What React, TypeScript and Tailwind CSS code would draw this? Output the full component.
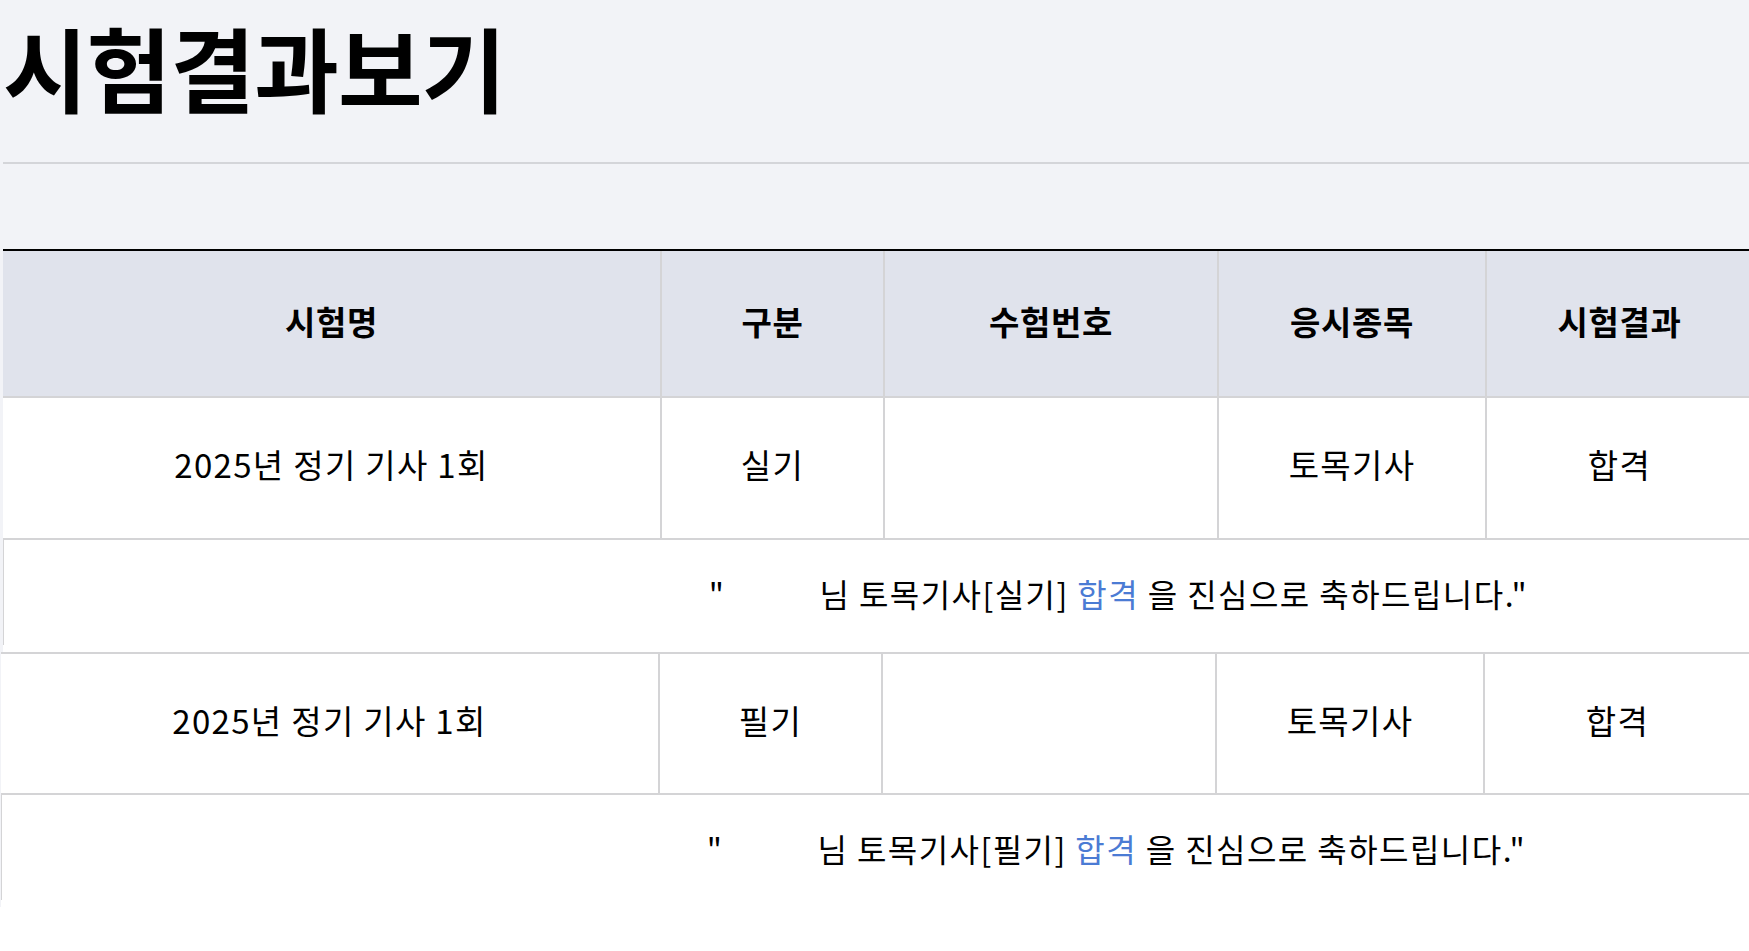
import React from "react";

const font = "font-['Noto_Sans_CJK_KR','Noto_Sans',sans-serif]";

type Rec = { name: string; kind: string; no: string; subject: string; result: string };

const records: Rec[] = [
  { name: "2025년 정기 기사 1회", kind: "실기", no: "", subject: "토목기사", result: "합격" },
  { name: "2025년 정기 기사 1회", kind: "필기", no: "", subject: "토목기사", result: "합격" },
];

const colW = ["w-[659px]", "w-[223px]", "w-[334px]", "w-[268px]", "w-[267px]", "w-[479px]"];

function HeaderRow() {
  const heads = ["시험명", "구분", "수험번호", "응시종목", "시험결과", ""];
  return (
    <div className="flex h-[147px] w-[2230px] bg-[#e0e3ec] border-b-2 border-[#d4d4d6]">
      {heads.map((h, i) => (
        <div
          key={i}
          className={`${colW[i]} shrink-0 flex items-center justify-center pb-[4px] border-r-2 border-[#d4d4d6] text-[33px] tracking-[0.02em] font-bold text-black`}
        >
          {h}
        </div>
      ))}
    </div>
  );
}

function DataRow({ r, top }: { r: Rec; top?: boolean }) {
  const cells = [r.name, r.kind, r.no, r.subject, r.result, ""];
  return (
    <div
      className={`flex w-[2230px] bg-white border-b-2 border-[#d4d4d6] ${top ? "h-[143px] border-t-2" : "h-[142px]"}`}
    >
      {cells.map((c, i) => (
        <div
          key={i}
          className={`${colW[i]} shrink-0 flex items-center justify-center pb-[6px] border-r-2 border-[#d4d4d6] text-[33px] tracking-[0.04em] text-black`}
        >
          {c}
        </div>
      ))}
    </div>
  );
}

function Message({ kind }: { kind: string }) {
  return (
    <div className="w-[2230px] bg-white pb-[7px]">
      <div className="h-[105px] border-l border-[#d4d4d6] flex items-center justify-center pt-[1px] text-[32px] tracking-[0.045em] text-black whitespace-pre">
        <span>"</span>
        <span className="inline-block w-[94px]"></span>
        <span>님 토목기사[{kind}] </span>
        <span className="text-[#4b7bd4]">합격</span>
        <span> 을 진심으로 축하드립니다."</span>
      </div>
    </div>
  );
}

export default function App() {
  return (
    <div className={`${font} w-full min-h-screen overflow-hidden bg-white`}>
      <div className="bg-[#f2f3f7] pl-[3px]">
        <div className="h-[164px] border-b-2 border-[#d4d5d9]">
          <h1 className="pt-[20px] text-[92px] leading-none font-bold tracking-[-0.01em] text-black">
            시험결과보기
          </h1>
        </div>
        <div className="mt-[85px] border-t-2 border-black w-[2230px]">
          <HeaderRow />
          <DataRow r={records[0]} />
          <Message kind={records[0].kind} />
          <div className="-ml-[2px]">
            <DataRow r={records[1]} top />
            <Message kind={records[1].kind} />
          </div>
        </div>
      </div>
    </div>
  );
}
